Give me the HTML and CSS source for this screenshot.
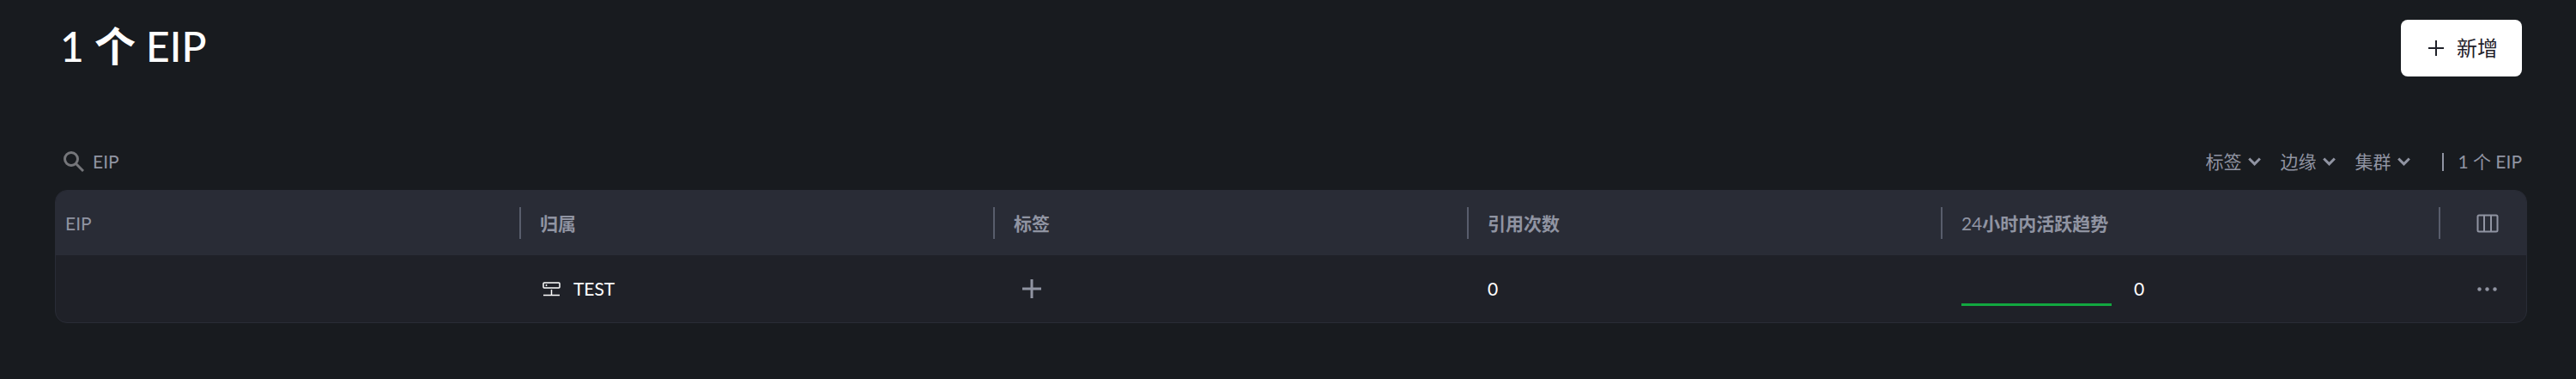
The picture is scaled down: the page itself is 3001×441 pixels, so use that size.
FILE: index.html
```html
<!doctype html>
<html lang="zh-CN">
    <head>
        <meta charset="utf-8">
        <title>EIP</title>
        <meta name="viewport" content="width=device-width, initial-scale=1">
        <link rel="stylesheet" href="styles.css">
    </head>
    <body>
        <header class="page-header">
            <h1>1 <b>个</b> EIP</h1>
            <button type="button" class="btn-add">
                <svg width="18" height="18" viewBox="0 0 18 18"><path d="M9 0v18M0 9h18" stroke="currentColor" stroke-width="2" fill="none"/></svg>
                <span>新增</span>
            </button>
        </header>

        <div class="toolbar">
            <label class="search">
                <svg width="24" height="24" viewBox="0 0 24 24" fill="none" stroke="currentColor" stroke-width="3"><circle cx="9" cy="9" r="7.5"/><path d="M14.500 14.500L23 23"/></svg>
                <input type="text" placeholder="EIP" aria-label="EIP">
            </label>
            <div class="filters">
                <label class="filter">
                    <select aria-label="标签"><option>标签</option></select>
                    <svg width="15" height="10" viewBox="0 0 15 10"><path d="M1.200 1.500l6.300 6.300 6.300-6.300"/></svg>
                </label>
                <label class="filter">
                    <select aria-label="边缘"><option>边缘</option></select>
                    <svg width="15" height="10" viewBox="0 0 15 10"><path d="M1.200 1.500l6.300 6.300 6.300-6.300"/></svg>
                </label>
                <label class="filter">
                    <select aria-label="集群"><option>集群</option></select>
                    <svg width="15" height="10" viewBox="0 0 15 10"><path d="M1.200 1.500l6.300 6.300 6.300-6.300"/></svg>
                </label>
                <span class="count">1 个 EIP</span>
            </div>
        </div>

        <div class="table-box">
            <table>
                <colgroup>
                    <col class="col-eip">
                    <col class="col-mid">
                    <col class="col-mid">
                    <col class="col-mid">
                    <col class="col-trend">
                    <col class="col-action">
                </colgroup>
                <thead>
                    <tr>
                        <th><div class="head">EIP</div></th>
                        <th><div class="head"><b>归属</b></div></th>
                        <th><div class="head"><b>标签</b></div></th>
                        <th><div class="head"><b>引用次数</b></div></th>
                        <th><div class="head">24<b>小时内活跃趋势</b></div></th>
                        <th class="action">
                            <button type="button" class="btn-icon" aria-label="列设置">
                                <svg width="26" height="22" viewBox="0 0 26 22" fill="none" stroke="currentColor" stroke-width="2"><rect x="1.500" y="1.500" width="23" height="19" rx="1.500"/><path d="M9 2v18M17 2v18"/></svg>
                            </button>
                        </th>
                    </tr>
                </thead>
                <tbody>
                    <tr>
                        <td></td>
                        <td>
                            <div class="owner">
                                <svg width="21" height="17" viewBox="0 0 21 17" fill="none" stroke="currentColor" stroke-width="1.500"><rect x="1" y="1" width="19" height="6" rx="1"/><path d="M4.500 3v2M10.500 9v6M1 15.500h19"/></svg>
                                <span>TEST</span>
                            </div>
                        </td>
                        <td>
                            <button type="button" class="btn-icon btn-tag" aria-label="添加标签">
                                <svg width="22" height="22" viewBox="0 0 22 22"><path d="M11 0v22M0 11h22" stroke="currentColor" stroke-width="3" fill="none"/></svg>
                            </button>
                        </td>
                        <td>0</td>
                        <td>
                            <div class="trend">
                                <svg width="175" height="39" viewBox="0 0 175 39"><path d="M0 37.500h175" stroke="#12a840" stroke-width="3"/></svg>
                                <span>0</span>
                            </div>
                        </td>
                        <td class="action">
                            <button type="button" class="btn-icon" aria-label="更多">
                                <svg width="23" height="5" viewBox="0 0 23 5" fill="currentColor"><circle cx="2.500" cy="2.500" r="2.200"/><circle cx="11.500" cy="2.500" r="2.200"/><circle cx="20.500" cy="2.500" r="2.200"/></svg>
                            </button>
                        </td>
                    </tr>
                </tbody>
            </table>
        </div>
    </body>
</html>
```
FILE: styles.css
```css
* {
    box-sizing: border-box;
}
body {
    margin: 0;
    padding: 23px 57px 40px 64px;
    background: #181b1f;
    color: #fff;
    font-family: Lato, "Noto Sans CJK SC", sans-serif;
    font-size: 21px;
    line-height: 30px;
}
svg {
    display: block;
    flex: none;
}
b {
    font-weight: 700;
}
button,
input,
select {
    margin: 0;
    padding: 0;
    border: 0;
    background: none;
    color: inherit;
    font: inherit;
}
button {
    cursor: pointer;
}

.page-header {
    display: flex;
    align-items: flex-start;
    justify-content: space-between;
    padding: 0 6px;
}
h1 {
    margin: 0;
    font-size: 48px;
    font-weight: 500;
    line-height: 62px;
}
.btn-add {
    display: flex;
    align-items: center;
    gap: 15px;
    height: 66px;
    padding: 0 28px 0 32px;
    border-radius: 8px;
    background: #fff;
    color: #1f2129;
    font-size: 24px;
}

.toolbar {
    display: flex;
    align-items: center;
    justify-content: space-between;
    margin-top: 84px;
    padding: 0 6px 0 10px;
    color: #9094a2;
}
.search {
    display: flex;
    align-items: center;
    gap: 10px;
    color: #75767a;
}
.search input {
    width: 300px;
    outline: none;
    color: #fff;
}
.search input::placeholder {
    color: #9094a2;
    opacity: 1;
}
.filters {
    display: flex;
    align-items: center;
    gap: 22px;
}
.filter {
    display: flex;
    align-items: center;
    gap: 8px;
}
.filter select {
    appearance: none;
}
.filter svg {
    fill: none;
    stroke: currentColor;
    stroke-width: 3;
}
.count {
    display: flex;
    align-items: center;
    gap: 16px;
    margin-left: 15px;
}
.count::before {
    content: "";
    width: 2px;
    height: 21px;
    background: #9094a2;
}

.table-box {
    margin-top: 18px;
    border: 1px solid #292c36;
    border-radius: 14px;
    background: #1f2128;
    overflow: hidden;
}
table {
    width: 100%;
    table-layout: fixed;
    border-collapse: collapse;
}
.col-eip {
    width: 18.83%;
}
.col-mid {
    width: 19.18%;
}
.col-trend {
    width: 20.15%;
}
.col-action {
    width: 100px;
}
th,
td {
    padding: 0;
    text-align: left;
}
th {
    height: 75px;
    background: #292c36;
    color: #9094a2;
    font-weight: 400;
}
td {
    height: 78px;
    padding-left: 22px;
}
.head {
    display: flex;
    align-items: center;
    height: 37px;
    padding-left: 22px;
    border-right: 2px solid #585d6c;
}
th:first-child .head {
    padding-left: 11px;
}
.btn-icon {
    display: flex;
    align-items: center;
    justify-content: center;
    color: #9094a2;
}
.action {
    padding: 0;
}
.action .btn-icon {
    width: 26px;
    height: 24px;
    margin-left: 42px;
}
.btn-tag {
    margin-left: 10px;
}
.owner {
    display: flex;
    align-items: center;
    gap: 15px;
    padding-left: 3px;
}
.trend {
    display: flex;
    align-items: center;
    gap: 26px;
}
```
